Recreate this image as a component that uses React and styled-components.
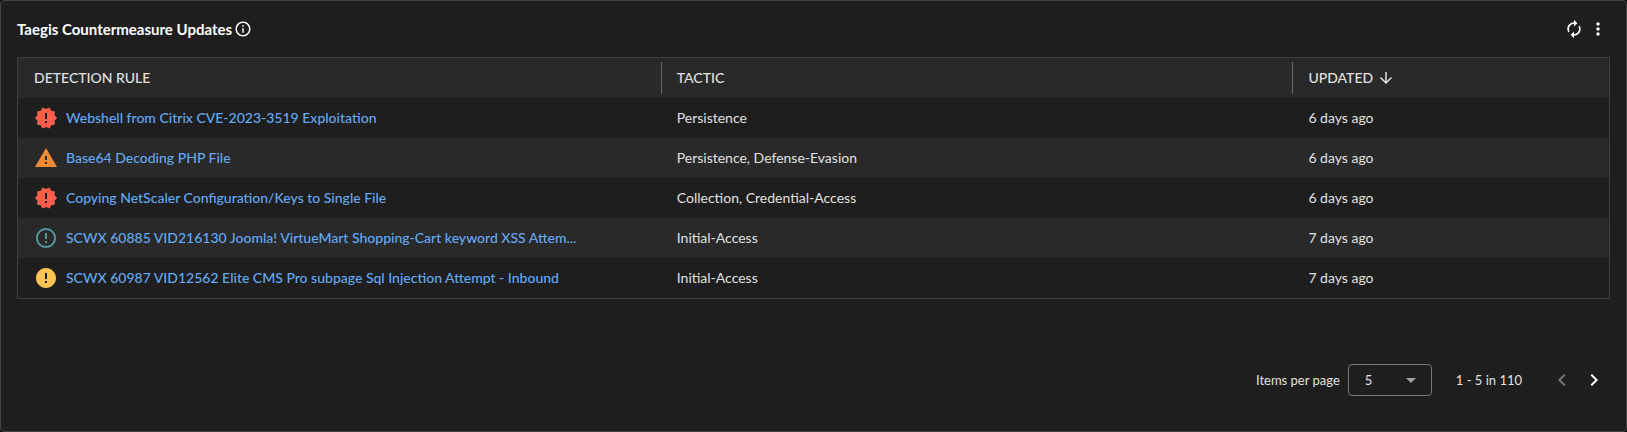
import React, { useState } from 'react';
import styled, { createGlobalStyle } from 'styled-components';
import {
  MdArrowDownward,
  MdAutorenew,
  MdChevronLeft,
  MdChevronRight,
  MdError,
  MdErrorOutline,
  MdInfoOutline,
  MdMoreVert,
  MdNewReleases,
  MdWarning,
} from 'react-icons/md';

const GlobalStyle = createGlobalStyle`
  *, *::before, *::after {
    box-sizing: border-box;
  }

  body {
    margin: 0;
    background: #0b0b0b;
    color: #e0e0e0;
    font-family: Lato, 'Open Sans', sans-serif;
    font-size: 14px;
    line-height: 20px;
  }
`;

const Panel = styled.section`
  display: flex;
  flex-direction: column;
  min-height: 100vh;
  padding: 16px;
  border: 1px solid #444;
  border-radius: 4px;
  background: #1e1e1e;
`;

const PanelHeader = styled.header`
  display: flex;
  align-items: center;
  justify-content: space-between;
  height: 24px;
  margin-bottom: 16px;
`;

const Title = styled.h2`
  display: flex;
  align-items: center;
  gap: 2px;
  margin: 0;
  color: #fff;
  font-size: 15px;
  font-weight: 700;
`;

const Actions = styled.div`
  display: flex;
  gap: 4px;
  padding-right: 2px;
`;

const IconButton = styled.button`
  display: flex;
  align-items: center;
  justify-content: center;
  width: ${({ $size }) => $size}px;
  height: ${({ $size }) => $size}px;
  padding: 0;
  border: 0;
  background: none;
  color: #fff;
  cursor: pointer;

  &:disabled {
    color: #777;
    cursor: default;
  }
`;

const TableFrame = styled.div`
  border: 1px solid #3c3c3c;
`;

const Table = styled.table`
  width: 100%;
  border-collapse: collapse;
  table-layout: fixed;
`;

const HeadCell = styled.th`
  width: ${({ $width }) => $width};
  height: 40px;
  padding: 0;
  background: #292929;
  font-weight: 500;
  text-align: left;
`;

const HeadLabel = styled.div`
  display: flex;
  align-items: center;
  gap: 4px;
  height: 32px;
  padding: 0 16px;

  ${({ $divided }) =>
    $divided &&
    `
    padding-left: 15px;
    border-left: 1px solid #666;
  `}
`;

const Row = styled.tr`
  background: #1e1e1e;

  &:nth-child(even) {
    background: #292929;
  }
`;

const Cell = styled.td`
  height: 40px;
  padding: 0 16px;
`;

const Rule = styled.div`
  display: flex;
  align-items: center;
  gap: 8px;
`;

const Severity = styled.span`
  display: flex;
  color: ${({ $color }) => $color};
`;

const RuleLink = styled.a`
  color: #64a8f2;
  font-weight: 500;
  text-decoration: none;

  &:hover {
    text-decoration: underline;
  }
`;

const Pagination = styled.footer`
  display: flex;
  align-items: center;
  justify-content: flex-end;
  margin-top: auto;
  padding-bottom: 19px;
  font-size: 13px;
`;

const SelectBox = styled.div`
  position: relative;
  margin: 0 24px 0 8px;
`;

const Select = styled.select`
  display: block;
  width: 84px;
  height: 32px;
  padding: 0 16px;
  border: 1px solid #777;
  border-radius: 4px;
  background: transparent;
  color: inherit;
  font: inherit;
  appearance: none;
`;

const SelectArrow = styled.svg`
  position: absolute;
  top: 14px;
  right: 16px;
  width: 10px;
  height: 5px;
  fill: #a0a0a0;
  pointer-events: none;
`;

const Pager = styled.div`
  display: flex;
  margin-left: 24px;
`;

const severities = {
  critical: { Icon: MdNewReleases, color: '#ff5f4a' },
  high: { Icon: MdWarning, color: '#f48b34' },
  medium: { Icon: MdError, color: '#ffc452' },
  low: { Icon: MdErrorOutline, color: '#5296a0' },
};

const rules = [
  {
    severity: 'critical',
    name: 'Webshell from Citrix CVE-2023-3519 Exploitation',
    tactic: 'Persistence',
    updated: '6 days ago',
  },
  {
    severity: 'high',
    name: 'Base64 Decoding PHP File',
    tactic: 'Persistence, Defense-Evasion',
    updated: '6 days ago',
  },
  {
    severity: 'critical',
    name: 'Copying NetScaler Configuration/Keys to Single File',
    tactic: 'Collection, Credential-Access',
    updated: '6 days ago',
  },
  {
    severity: 'low',
    name: 'SCWX 60885 VID216130 Joomla! VirtueMart Shopping-Cart keyword XSS Attem...',
    tactic: 'Initial-Access',
    updated: '7 days ago',
  },
  {
    severity: 'medium',
    name: 'SCWX 60987 VID12562 Elite CMS Pro subpage Sql Injection Attempt - Inbound',
    tactic: 'Initial-Access',
    updated: '7 days ago',
  },
];

const RuleRow = ({ rule: { severity, name, tactic, updated } }) => {
  const { Icon, color } = severities[severity];

  return (
    <Row>
      <Cell>
        <Rule>
          <Severity $color={color}>
            <Icon size={24} />
          </Severity>
          <RuleLink href="#">{name}</RuleLink>
        </Rule>
      </Cell>
      <Cell>{tactic}</Cell>
      <Cell>{updated}</Cell>
    </Row>
  );
};

const App = () => {
  const [pageSize, setPageSize] = useState('5');

  return (
    <>
      <GlobalStyle />
      <Panel>
        <PanelHeader>
          <Title>
            Taegis Countermeasure Updates
            <MdInfoOutline size={18} />
          </Title>
          <Actions>
            <IconButton $size={20} aria-label="Refresh">
              <MdAutorenew size={20} />
            </IconButton>
            <IconButton $size={20} aria-label="More options">
              <MdMoreVert size={20} />
            </IconButton>
          </Actions>
        </PanelHeader>
        <TableFrame>
          <Table>
            <thead>
              <tr>
                <HeadCell $width="40.4%">
                  <HeadLabel>DETECTION RULE</HeadLabel>
                </HeadCell>
                <HeadCell $width="39.7%">
                  <HeadLabel $divided>TACTIC</HeadLabel>
                </HeadCell>
                <HeadCell>
                  <HeadLabel $divided>
                    UPDATED
                    <MdArrowDownward size={18} />
                  </HeadLabel>
                </HeadCell>
              </tr>
            </thead>
            <tbody>
              {rules.map((rule) => (
                <RuleRow key={rule.name} rule={rule} />
              ))}
            </tbody>
          </Table>
        </TableFrame>
        <Pagination>
          <label htmlFor="page-size">Items per page</label>
          <SelectBox>
            <Select
              id="page-size"
              value={pageSize}
              onChange={(e) => setPageSize(e.target.value)}
            >
              <option>5</option>
              <option>10</option>
              <option>25</option>
            </Select>
            <SelectArrow viewBox="0 0 10 5">
              <path d="M0 0h10L5 5z" />
            </SelectArrow>
          </SelectBox>
          <span>1 - 5 in 110</span>
          <Pager>
            <IconButton $size={32} aria-label="Previous page" disabled>
              <MdChevronLeft size={24} />
            </IconButton>
            <IconButton $size={32} aria-label="Next page">
              <MdChevronRight size={24} />
            </IconButton>
          </Pager>
        </Pagination>
      </Panel>
    </>
  );
};

export default App;
